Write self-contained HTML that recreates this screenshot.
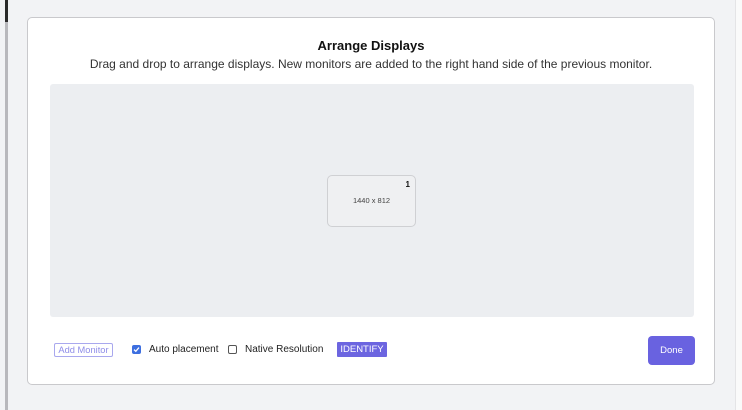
<!DOCTYPE html>
<html><head><style>
body{margin:0;width:742px;height:410px;background:#f2f3f5;position:relative;overflow:hidden;font-family:"Liberation Sans",sans-serif;}
.lbar{position:absolute;left:5px;top:0;width:3px;height:410px;background:#b8b8bc}
.lbar2{position:absolute;left:5px;top:0;width:3px;height:22px;background:#2a2a2a}
.rside{position:absolute;left:735px;top:0;width:7px;height:410px;background:#fafafa;border-left:1px solid #e4e4e6}
.card{position:absolute;left:27px;top:17px;width:688px;height:368px;background:#fff;border:1px solid #c9c9cc;border-radius:5px;box-sizing:border-box}
h1{position:absolute;top:38px;left:27px;width:688px;text-align:center;margin:0;font-size:13px;font-weight:bold;color:#111}
.sub{position:absolute;top:57px;left:27px;width:688px;text-align:center;font-size:12px;color:#333}
.area{position:absolute;left:50px;top:84px;width:644px;height:233px;background:#eceef1;border-radius:3px}
.mon{position:absolute;left:327px;top:175px;width:89px;height:52px;background:#eff0f2;border:1px solid #cfd0d3;border-radius:5px;box-sizing:border-box;font-size:7.5px;color:#444;text-align:center;line-height:50px}
.mon b{position:absolute;right:5px;top:4px;line-height:10px;font-size:8px;color:#111}
.add{position:absolute;left:54px;top:343px;width:59px;height:14px;border:1px solid #a9a8ee;border-radius:2px;box-sizing:border-box;color:#8f8de8;font-size:9.3px;text-align:center;line-height:12px;white-space:nowrap}
.cb{position:absolute;top:345px;width:9px;height:9px;border-radius:2px;box-sizing:border-box}
.lbl{position:absolute;top:345px;font-size:10px;color:#222;line-height:10px}
.id{position:absolute;left:337px;top:342px;width:50px;height:15px;background:#6c65e0;color:#fff;font-size:9.5px;text-align:center;line-height:15px;border-radius:1px}
.done{position:absolute;left:648px;top:336px;width:47px;height:29px;background:#6962e0;border-radius:4px;color:#fff;font-size:9.5px;text-align:center;line-height:29px}
</style></head><body>
<div class="lbar"></div><div class="lbar2"></div><div class="rside"></div>
<div class="card"></div>
<h1>Arrange Displays</h1>
<div class="sub">Drag and drop to arrange displays. New monitors are added to the right hand side of the previous monitor.</div>
<div class="area"></div>
<div class="mon">1440 x 812<b>1</b></div>
<div class="add">Add Monitor</div>
<div class="cb" style="left:132px;background:#3d6fe0"><svg width="9" height="9" viewBox="0 0 9 9" style="position:absolute;left:0;top:0"><path d="M2 4.6L3.8 6.3L7 2.6" stroke="#fff" stroke-width="1.3" fill="none"/></svg></div>
<div class="lbl" style="left:149px">Auto placement</div>
<div class="cb" style="left:228px;border:1px solid #555;background:#fff"></div>
<div class="lbl" style="left:245px">Native Resolution</div>
<div class="id">IDENTIFY</div>
<div class="done">Done</div>
</body></html>
